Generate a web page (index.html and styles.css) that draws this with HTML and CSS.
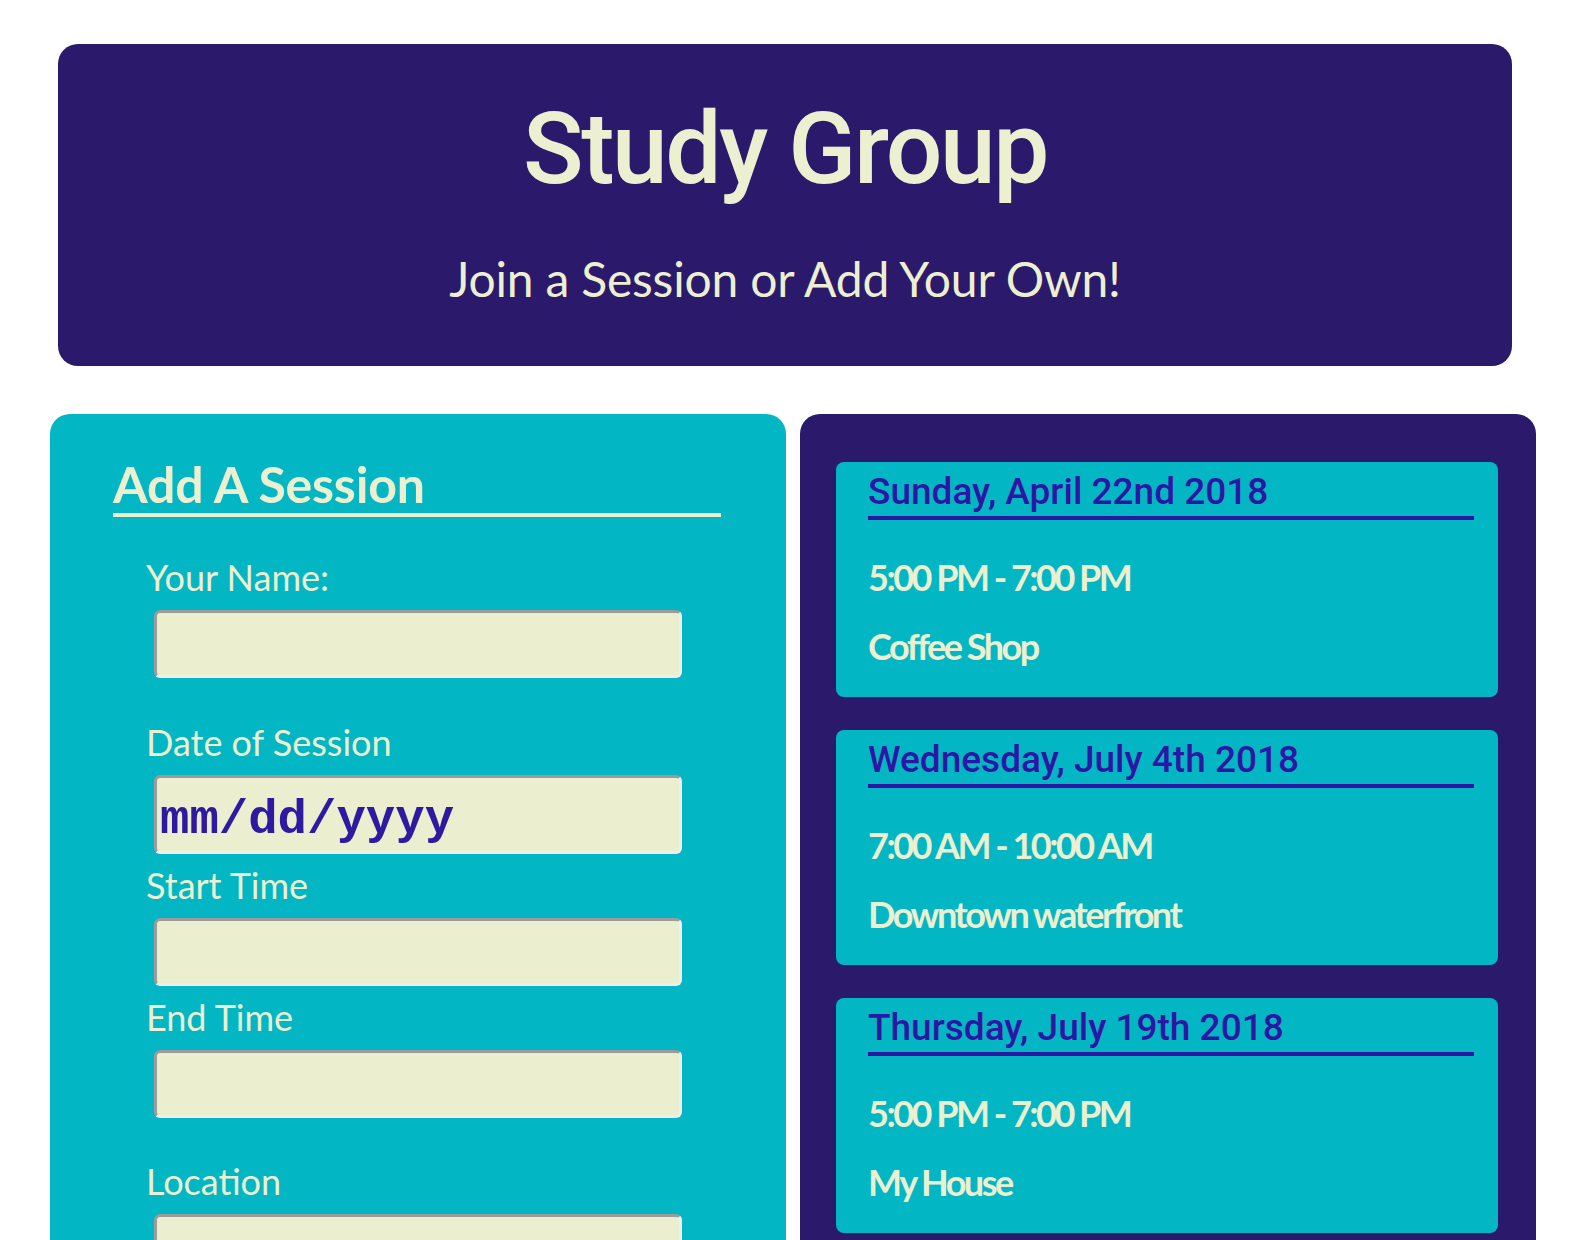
FILE: index.html
```html
<!DOCTYPE html>
<html>
<head>
<meta charset="utf-8">
<title>Study Group</title>
<link rel="stylesheet" href="styles.css">
</head>
<body>
<header class="hero">
  <h1 class="hero-title">Study Group</h1>
  <p class="hero-sub">Join a Session or Add Your Own!</p>
</header>
<main class="panels">
  <section class="panel panel-form">
    <h2 class="form-title">Add A Session</h2>
    <form class="form">
      <label class="label label-name" for="name">Your Name:</label>
      <input class="field" id="name" type="text">
      <label class="label label-date" for="date">Date of Session</label>
      <input class="field field-date" id="date" type="text" placeholder="mm/dd/yyyy">
      <label class="label label-start" for="start">Start Time</label>
      <input class="field" id="start" type="text">
      <label class="label label-end" for="end">End Time</label>
      <input class="field" id="end" type="text">
      <label class="label label-loc" for="loc">Location</label>
      <input class="field" id="loc" type="text">
    </form>
  </section>
  <section class="panel panel-list">
    <article class="card">
      <h3 class="card-date">Sunday, April 22nd 2018</h3>
      <p class="card-time">5:00 PM - 7:00 PM</p>
      <p class="card-loc">Coffee Shop</p>
    </article>
    <article class="card">
      <h3 class="card-date">Wednesday, July 4th 2018</h3>
      <p class="card-time">7:00 AM - 10:00 AM</p>
      <p class="card-loc">Downtown waterfront</p>
    </article>
    <article class="card">
      <h3 class="card-date">Thursday, July 19th 2018</h3>
      <p class="card-time">5:00 PM - 7:00 PM</p>
      <p class="card-loc">My House</p>
    </article>
  </section>
</main>
</body>
</html>
```
FILE: styles.css
```css
* { box-sizing: border-box; }
body {
  margin: 8px;
  background: #ffffff;
  font-family: "Lato", "Liberation Sans", sans-serif;
  color: #ecf0d0;
}
.hero {
  margin: 36px 0 0 50px;
  width: 1454px;
  height: 322px;
  background: #2b196b;
  border-radius: 20px;
  text-align: center;
  padding-top: 55px;
  display: flex;
  flex-direction: column;
  align-items: center;
}
.hero-title {
  margin: 0;
  font-family: "Roboto", sans-serif;
  font-weight: 500;
  font-size: 100px;
  line-height: 100px;
  letter-spacing: -2.4px;
}
.hero-sub {
  margin: 56px 0 0;
  font-family: "Lato", sans-serif;
  font-size: 48px;
  line-height: 48px;
  letter-spacing: -0.2px;
}
.panels {
  display: flex;
  gap: 14px;
  margin: 48px 0 0 42px;
}
.panel {
  width: 736px;
  height: 900px;
  border-radius: 20px;
}
.panel-form {
  background: #02b7c3;
  padding: 45px 0 0 63px;
}
.form-title {
  margin: 0;
  width: 608px;
  font-family: "Lato", sans-serif;
  font-weight: 700;
  font-size: 50px;
  line-height: 50px;
  letter-spacing: -0.2px;
  padding-bottom: 4px;
  border-bottom: 4px solid #ecf0d0;
}
.form {
  display: flex;
  flex-direction: column;
  align-items: flex-start;
  padding-left: 33px;
}
.label {
  font-size: 36px;
  line-height: 36px;
}
.label-name { margin-top: 42px; }
.label-date { margin-top: 46px; }
.label-start { margin-top: 13px; }
.label-end { margin-top: 13px; }
.label-loc { margin-top: 45px; }
.field {
  margin: 15px 0 0 8px;
  width: 528px;
  height: 68px;
  background: #ebefcf;
  border: 3px solid;
  border-color: #9b9b9b #eeeeee #eeeeee #9b9b9b;
  border-radius: 6px;
  padding: 0 4px;
  font-size: 24px;
  outline: none;
}
.field-date {
  height: 79px;
  font-family: "Liberation Mono", monospace;
  font-weight: 700;
  font-size: 49px;
  color: #2e1aa0;
  padding: 10px 3px 0;
}
.field-date::placeholder {
  color: #2e1aa0;
  opacity: 1;
}
.panel-list {
  background: #2b196b;
  padding: 48px 38px 0 36px;
}
.card {
  height: 235px;
  margin-bottom: 33px;
  background: #02b7c3;
  border-radius: 8px;
  padding: 12px 24px 0 32px;
}
.card-date {
  margin: 0;
  font-family: "Roboto", sans-serif;
  font-weight: 500;
  font-size: 37px;
  line-height: 36px;
  color: #2e16a5;
  padding-bottom: 6px;
  border-bottom: 4px solid #2e16a5;
}
.card-time, .card-loc {
  margin: 0;
  font-family: "Lato", sans-serif;
  font-weight: 700;
  font-size: 36px;
  line-height: 36px;
  letter-spacing: -2.5px;
}
.card-time { margin-top: 39px; }
.card-loc { margin-top: 33px; }
```
